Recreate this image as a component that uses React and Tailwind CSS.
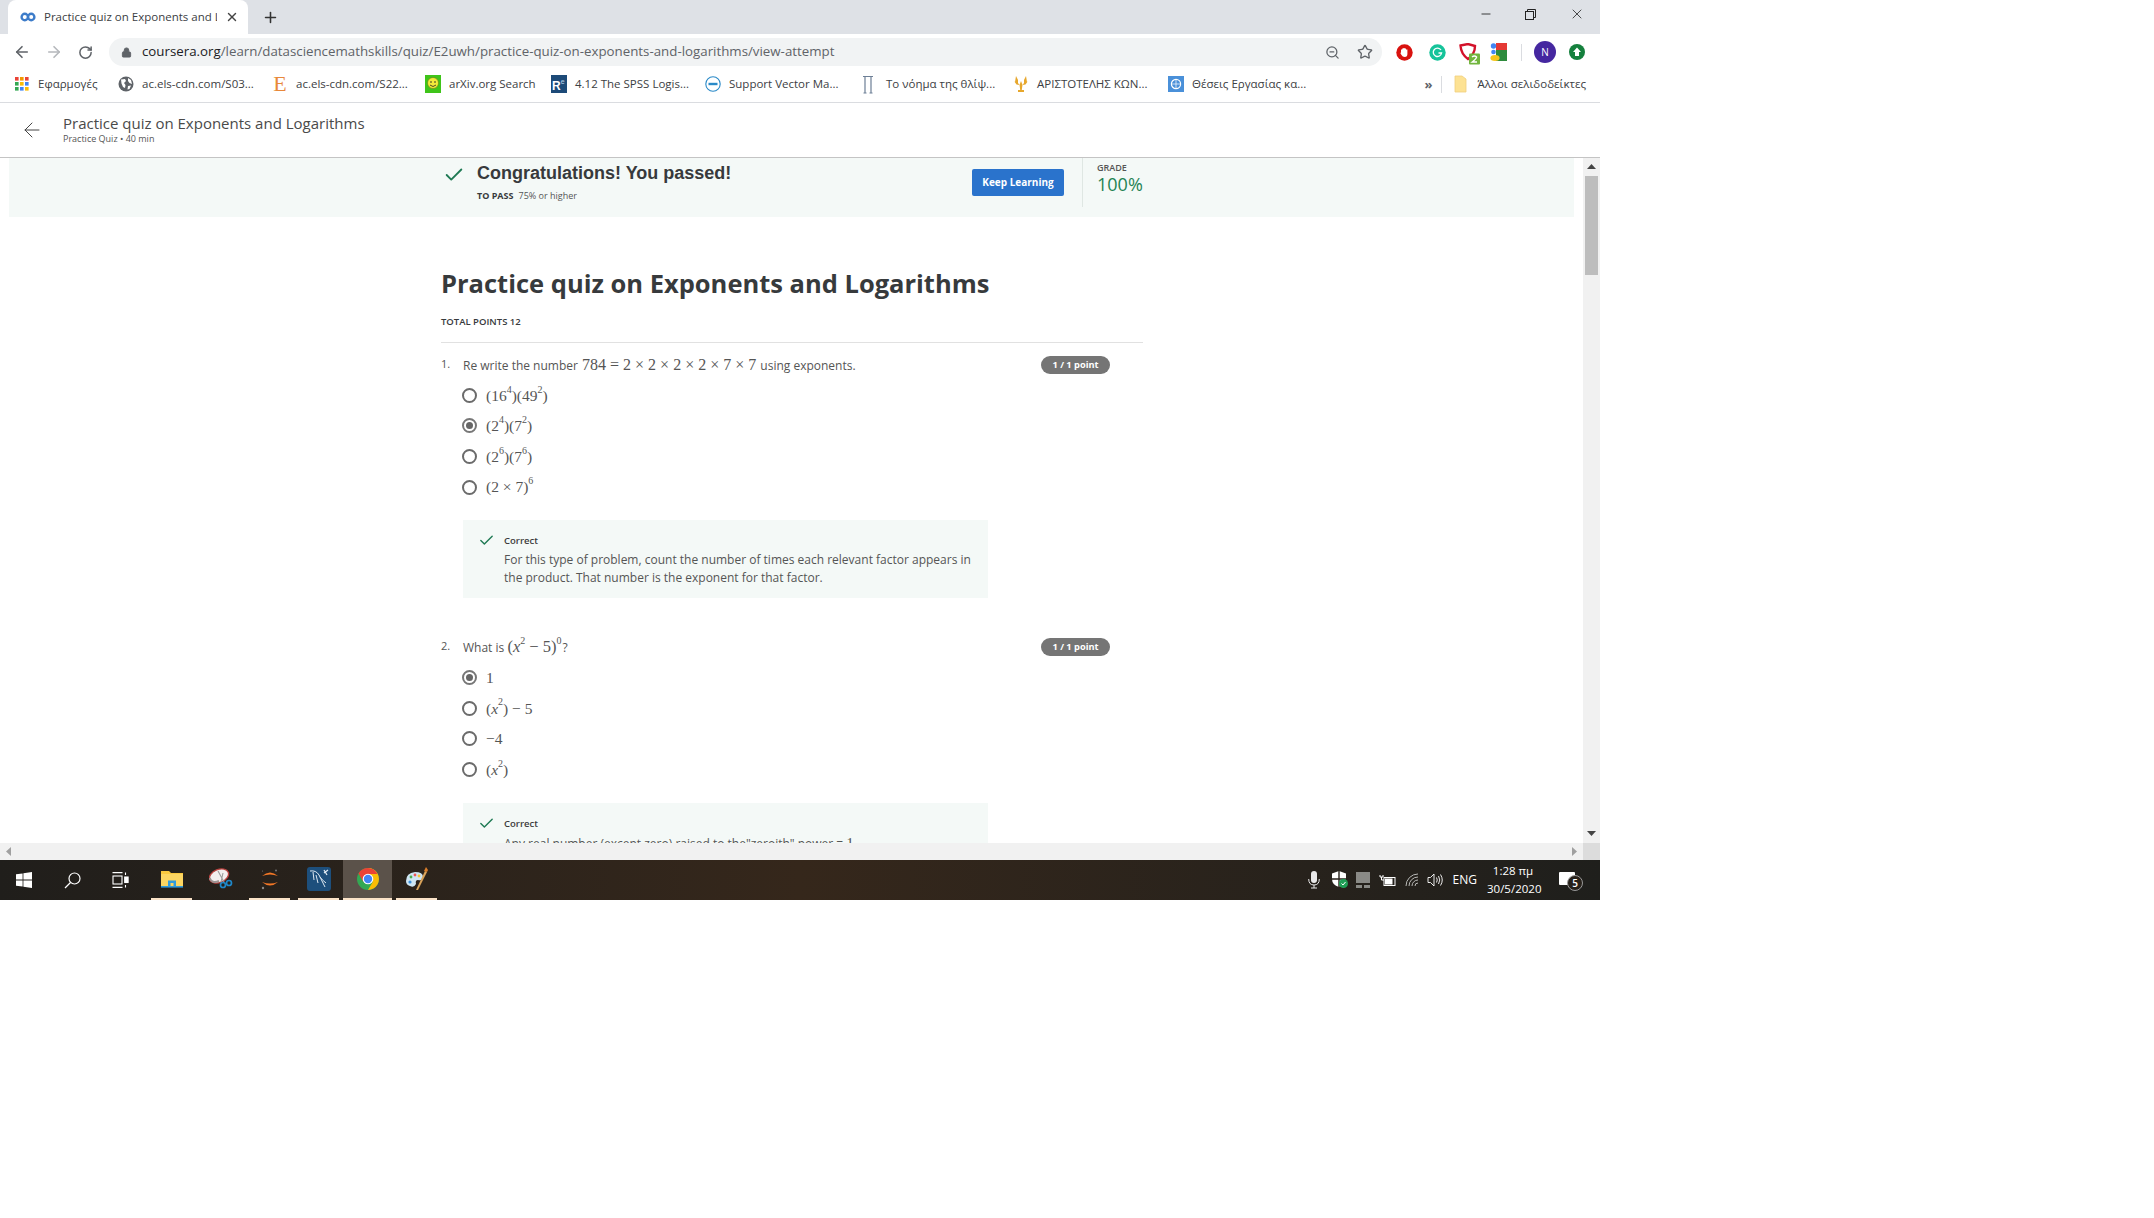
import React from "react";
import { ArrowLeft, ArrowRight, RotateCw, Lock, ZoomOut, Star, Plus, X, Minus, Check } from "lucide-react";

const ui = "font-['Open_Sans',sans-serif]";
const math = "font-['Liberation_Serif',serif]";

const Sup = ({ children }) => <sup className="text-[10px] leading-none relative -top-[2px] align-super">{children}</sup>;
const Var = ({ children }) => <i>{children}</i>;

const Favicon = () => (
  <svg width="16" height="16" viewBox="0 0 16 16" fill="none" stroke="#3d7cc9" strokeWidth="2.4">
    <circle cx="4.8" cy="8" r="3.2" />
    <circle cx="11.2" cy="8" r="3.2" />
  </svg>
);

const AppsIcon = () => {
  const colors = ["#ea4335", "#f29900", "#ea4335", "#34a853", "#fbbc05", "#4285f4", "#34a853", "#4285f4", "#fbbc05"];
  return (
    <svg width="14" height="14" viewBox="0 0 14 14">
      {colors.map((c, i) => (
        <rect key={i} x={(i % 3) * 5} y={Math.floor(i / 3) * 5} width="3.6" height="3.6" fill={c} />
      ))}
    </svg>
  );
};

const GlobeIcon = () => (
  <svg width="16" height="16" viewBox="0 0 16 16">
    <circle cx="8" cy="8" r="7.5" fill="#5f6368" />
    <path d="M3 3.5 L7 3 L8 5 L6 7 L7.5 9 L7 12 L5 11 L3.5 7.5 Z M10 2 L13 4 L14 8 L11.5 7 L10 5 Z M10 10 L13 9.5 L11.5 13 L9.5 13.5 Z" fill="#fff" />
  </svg>
);

const SerifE = () => <span className={`${math} text-[22px] leading-none text-[#e8883a]`}>E</span>;

const ArxivIcon = () => (
  <svg width="16" height="18" viewBox="0 0 16 18">
    <rect width="16" height="18" fill="#3fc41a" />
    <circle cx="8" cy="8" r="5.5" fill="#f2ea3a" stroke="#6a7a10" strokeWidth="0.6" />
    <circle cx="6" cy="7" r="0.8" fill="#222" />
    <circle cx="10" cy="7" r="0.8" fill="#222" />
    <path d="M5 10 Q8 13 11 10" stroke="#222" strokeWidth="0.8" fill="none" />
  </svg>
);

const RIcon = () => (
  <div className="w-[16px] h-[18px] bg-[#1d4a78] flex items-end pl-[1px] pb-[1px]">
    <span className="font-['Liberation_Sans',sans-serif] font-bold text-[12px] leading-none text-white">R</span>
    <span className="font-['Liberation_Sans',sans-serif] text-[7px] leading-none text-[#b9d3ea] mb-[7px]">e</span>
  </div>
);

const DellIcon = () => (
  <svg width="16" height="16" viewBox="0 0 16 16" fill="none">
    <circle cx="8" cy="8" r="7.2" stroke="#2a8ac8" strokeWidth="1.1" />
    <rect x="3.5" y="6.8" width="9" height="2.4" fill="#2a8ac8" />
  </svg>
);

const PiIcon = () => (
  <svg className="-ml-[4px]" width="12" height="19" viewBox="0 0 12 19" fill="none" stroke="#6d7f96" strokeWidth="1.2">
    <path d="M1 1.5 H11 M3 1.5 V18 M9 1.5 V18 M1.5 18 H4.5 M7.5 18 H10.5" />
  </svg>
);

const GoldIcon = () => (
  <svg width="16" height="18" viewBox="0 0 16 18" fill="#e7a72c">
    <path d="M8 6 L9.5 10 Q9 13 8.8 15 H11 V17 H5 V15 H7.2 Q7 13 6.5 10 Z" />
    <path d="M3 1 L5 5 L5 8 L6.5 10 L3.5 9.5 L1 6 L2 7 Z M13 1 L11 5 L11 8 L9.5 10 L12.5 9.5 L15 6 L14 7 Z" />
  </svg>
);

const UnIcon = () => (
  <svg width="16" height="16" viewBox="0 0 16 16">
    <rect width="16" height="16" fill="#4a90d9" />
    <circle cx="8" cy="8" r="4.6" fill="none" stroke="#fff" strokeWidth="1.2" />
    <path d="M8 3.5 V12.5 M3.5 8 H12.5" stroke="#fff" strokeWidth="0.7" />
  </svg>
);

const FolderBookmark = () => (
  <svg width="13" height="18" viewBox="0 0 13 18">
    <path d="M1 1 H8 L12 4 V17 H1 Z" fill="#fde293" stroke="#f0cf7d" strokeWidth="0.8" />
  </svg>
);

const bookmarks = [
  { label: "Εφαρμογές", icon: <AppsIcon />, width: "w-[104px]" },
  { label: "ac.els-cdn.com/S03...", icon: <GlobeIcon />, width: "w-[154px]" },
  { label: "ac.els-cdn.com/S22...", icon: <SerifE />, width: "w-[153px]" },
  { label: "arXiv.org Search", icon: <ArxivIcon />, width: "w-[126px]" },
  { label: "4.12 The SPSS Logis...", icon: <RIcon />, width: "w-[154px]" },
  { label: "Support Vector Ma...", icon: <DellIcon />, width: "w-[157px]" },
  { label: "Το νόημα της θλίψ...", icon: <PiIcon />, width: "w-[151px]" },
  { label: "ΑΡΙΣΤΟΤΕΛΗΣ ΚΩΝ...", icon: <GoldIcon />, width: "w-[155px]" },
  { label: "Θέσεις Εργασίας κα...", icon: <UnIcon />, width: "w-[150px]" },
];

const AdblockIcon = () => (
  <svg width="17" height="17" viewBox="0 0 17 17">
    <circle cx="8.5" cy="8.5" r="8.2" fill="#d9120f" />
    <path d="M5 9 V5.5 H6.2 V4.5 H7.4 V4 H8.6 V4.5 H10 V5.5 H11.4 V10 Q11.4 13 8.8 13 Q6.5 13 5.5 11 L4 8.5 Z" fill="#fff" />
  </svg>
);

const GrammarlyIcon = () => (
  <svg width="17" height="17" viewBox="0 0 17 17">
    <circle cx="8.5" cy="8.5" r="8.2" fill="#15c39a" />
    <path d="M12 6 A4.2 4.2 0 1 0 12.6 9 H9.5" fill="none" stroke="#fff" strokeWidth="1.3" />
  </svg>
);

const ShieldIcon = () => (
  <svg width="22" height="22" viewBox="0 0 22 22">
    <path d="M1.5 2.5 L9 1 L16 3 Q16 11 9 16 Q2 11 1.5 2.5 Z" fill="none" stroke="#d3122a" strokeWidth="2.4" />
    <rect x="10" y="10.5" width="11" height="11" rx="1" fill="#72b53e" />
    <path d="M13 14 Q15.5 12 17.6 14 Q17.6 15.5 13.2 19 H18" fill="none" stroke="#fff" strokeWidth="1.4" />
  </svg>
);

const GoogleExtIcon = () => (
  <svg width="17" height="18" viewBox="0 0 17 18">
    <rect x="6" y="0" width="11" height="9" fill="#e53935" />
    <rect x="6" y="7" width="11" height="11" fill="#2e8b3d" />
    <circle cx="3.5" cy="3" r="2.7" fill="#4285f4" />
    <circle cx="3.5" cy="9" r="2.3" fill="#4285f4" />
    <ellipse cx="5" cy="15" rx="4.6" ry="3" fill="#f8c51c" />
  </svg>
);

const UploadIcon = () => (
  <svg width="16" height="16" viewBox="0 0 16 16">
    <circle cx="8" cy="8" r="8" fill="#15803d" />
    <path d="M8 3.5 L12 8 H10 V12 H6 V8 H4 Z" fill="#fff" />
  </svg>
);

const WinLogo = () => (
  <svg width="16" height="16" viewBox="0 0 16 16" fill="#fff">
    <path d="M0 2.3 L6.6 1.4 V7.6 H0 Z M7.4 1.3 L16 0 V7.6 H7.4 Z M0 8.4 H6.6 V14.6 L0 13.7 Z M7.4 8.4 H16 V16 L7.4 14.7 Z" />
  </svg>
);

const SearchTask = () => (
  <svg width="17" height="17" viewBox="0 0 17 17" fill="none" stroke="#fff" strokeWidth="1.2">
    <circle cx="10.5" cy="6.5" r="5.5" />
    <path d="M6.5 10.5 L1 16" />
  </svg>
);

const TaskView = () => (
  <svg width="17" height="16" viewBox="0 0 17 16" fill="none" stroke="#fff" strokeWidth="1.1">
    <path d="M0.5 0.6 H10.5 M0.5 15.4 H10.5" />
    <rect x="1" y="4" width="9" height="8" />
    <path d="M13.5 0.5 V3 M13.5 13 V15.5" />
    <rect x="12.7" y="5" width="3.4" height="5.5" fill="#fff" />
  </svg>
);

const ExplorerIcon = () => (
  <svg width="22" height="18" viewBox="0 0 22 18">
    <path d="M0 1 H8 L10 3 H22 V17 H0 Z" fill="#f9c83f" />
    <rect x="0" y="4" width="22" height="13" fill="#fbd562" />
    <path d="M7 16.5 V10.5 H15 V16.5 H12.5 V13 H9.5 V16.5 Z" fill="#2f9bdc" />
    <rect x="0" y="16" width="22" height="1.6" fill="#2f9bdc" />
  </svg>
);

const SnipIcon = () => (
  <svg width="24" height="22" viewBox="0 0 24 22">
    <ellipse cx="10" cy="8" rx="10" ry="6.5" transform="rotate(-22 10 8)" fill="#f3eeee" stroke="#b9423f" strokeWidth="1.4" />
    <path d="M0.5 10 Q3 16 10 13" fill="none" stroke="#9c9292" strokeWidth="2" />
    <path d="M9 3 L15 14 M14 5 L12 14" stroke="#9a9a9a" strokeWidth="1.1" />
    <circle cx="14" cy="17" r="2.5" fill="none" stroke="#1f88c9" strokeWidth="1.7" />
    <circle cx="20" cy="15" r="2.5" fill="none" stroke="#1f88c9" strokeWidth="1.7" />
  </svg>
);

const JupyterIcon = () => (
  <svg width="20" height="22" viewBox="0 0 20 22">
    <path d="M2 8 Q10 1 18 8 Q10 5 2 8 Z M2 14 Q10 21 18 14 Q10 17 2 14 Z" fill="#f37726" />
    <circle cx="16" cy="2.5" r="1" fill="#777" />
    <circle cx="3" cy="20" r="1.2" fill="#888" />
    <circle cx="2.5" cy="3" r="0.6" fill="#777" />
  </svg>
);

const MysqlIcon = () => (
  <svg width="24" height="24" viewBox="0 0 24 24">
    <rect width="24" height="24" rx="3" fill="#1d4f7c" />
    <path d="M3 4 Q9 3 12 8 Q14 12 15 14 L18 20 M6 5 L7 13 M9 8 L11 16 M13 10 Q15 13 19 16" fill="none" stroke="#dfe9f2" strokeWidth="1" />
    <path d="M17 3 L20 8 M21 3 L17 6" stroke="#dfe9f2" strokeWidth="1.3" />
  </svg>
);

const ChromeIcon = () => (
  <svg width="22" height="22" viewBox="0 0 22 22">
    <circle cx="11" cy="11" r="11" fill="#34a853" />
    <path d="M11 0 A11 11 0 0 1 20.5 5.5 L11 5.5 Z M11 5.5 H20.5 A11 11 0 0 1 11 22 L15.8 13.8 Z" fill="#fbbc05" />
    <path d="M11 0 A11 11 0 0 0 1.5 5.5 L6.2 13.8 L11 6 H20.5 A11 11 0 0 0 11 0 Z" fill="#ea4335" />
    <circle cx="11" cy="11" r="5.3" fill="#fff" />
    <circle cx="11" cy="11" r="4.2" fill="#4285f4" />
  </svg>
);

const PaintIcon = () => (
  <svg width="24" height="24" viewBox="0 0 24 24">
    <path d="M1 14 Q1 6 10 5 Q18 5 18 10 Q18 14 13 13 Q10 13 11 17 Q9 21 5 19 Q1 18 1 14 Z" fill="#cfe6f4" />
    <circle cx="6" cy="10" r="1.4" fill="#4caf50" />
    <circle cx="10" cy="8" r="1.4" fill="#e55" />
    <circle cx="14" cy="9" r="1.4" fill="#f5c53a" />
    <circle cx="5" cy="15" r="1.6" fill="#3a8fdc" />
    <path d="M11 23 L20 4 L22 5 L13 23 Z" fill="#d9a35a" />
    <path d="M19 4 L21 0 L23 3 L22 5 Z" fill="#d87d2b" />
  </svg>
);

const taskApps = [
  { key: "explorer", icon: <ExplorerIcon />, bar: true },
  { key: "snip", icon: <SnipIcon />, bar: false },
  { key: "jupyter", icon: <JupyterIcon />, bar: true },
  { key: "mysql", icon: <MysqlIcon />, bar: true },
  { key: "chrome", icon: <ChromeIcon />, bar: true, active: true },
  { key: "paint", icon: <PaintIcon />, bar: true },
];

const TrayIcons = () => (
  <div className="flex items-center">
    <svg className="ml-[8px]" width="12" height="18" viewBox="0 0 12 18" fill="#e9e9e9">
      <rect x="3" y="0" width="6" height="12" rx="3" />
      <path d="M0.7 8 Q0.7 14 6 14 Q11.3 14 11.3 8 M6 14 V17 M3 17 H9" fill="none" stroke="#e9e9e9" />
    </svg>
    <svg className="ml-[12px]" width="16" height="18" viewBox="0 0 16 18">
      <path d="M7 0 L14 2.5 V8 Q14 14 7 16 Q0 14 0 8 V2.5 Z" fill="#fff" />
      <path d="M7 0 V16 M0 8 H14" stroke="#27211a" strokeWidth="1.4" />
      <circle cx="11.5" cy="12.5" r="4.5" fill="#1f9d55" />
      <path d="M9.5 12.5 L11 14 L13.5 11" stroke="#fff" fill="none" />
    </svg>
    <svg className="ml-[8px]" width="14" height="16" viewBox="0 0 14 16" fill="#8a8a86">
      <rect x="0" y="0" width="14" height="11" />
      <rect x="0" y="13" width="6" height="3" />
      <rect x="8" y="13" width="6" height="3" />
    </svg>
    <svg className="ml-[9px]" width="17" height="13" viewBox="0 0 17 13" fill="none" stroke="#fff">
      <rect x="5" y="3.5" width="11" height="8" />
      <rect x="6.5" y="5" width="6.5" height="5" fill="#fff" />
      <path d="M1 1 V3 H4 V1 M2.5 3 V6 H5" />
    </svg>
    <svg className="ml-[9px]" width="14" height="14" viewBox="0 0 14 14" fill="none" stroke="#b9b9b6">
      <path d="M1 13 A12 12 0 0 1 13 1 M4 13 A9 9 0 0 1 13 4 M7 13 A6 6 0 0 1 13 7 M10 13 A3 3 0 0 1 13 10" />
    </svg>
    <svg className="ml-[8px]" width="17" height="14" viewBox="0 0 17 14" fill="none" stroke="#fff" strokeWidth="0.9">
      <path d="M1 4.5 H3.5 L7 1 V13 L3.5 9.5 H1 Z M9.5 4.5 Q11 7 9.5 9.5 M11.5 3 Q14 7 11.5 11 M13.5 1.5 Q17 7 13.5 12.5" />
    </svg>
  </div>
);

const Radio = ({ checked }) => (
  <span className={`w-[15px] h-[15px] rounded-full border-2 flex items-center justify-center shrink-0 ${checked ? "border-[#777]" : "border-[#6b6b6b]"}`}>
    {checked && <span className="w-[7px] h-[7px] rounded-full bg-[#666]" />}
  </span>
);

const Question = ({ number, text, options, selected, feedback }) => (
  <div>
    <div className="flex h-[18px] items-center w-[669px]">
      <span className="w-[22px] text-[11px] text-[#555] -mt-[2px]">{number}.</span>
      <div className="flex-1 text-[12px] text-[#555] whitespace-nowrap">{text}</div>
      <span className="w-[69px] h-[18px] rounded-full bg-[#757575] text-white text-[9.25px] font-bold flex items-center justify-center">1 / 1 point</span>
    </div>
    <div className="mt-[6px] ml-[21px]">
      {options.map((opt, i) => (
        <div key={i} className="flex items-center h-[30.6px] gap-[9px]">
          <Radio checked={i === selected} />
          <span className={`${math} text-[15.5px] text-[#555]`}>{opt}</span>
        </div>
      ))}
    </div>
    <div className="mt-[18px] ml-[22px] w-[525px] bg-[#f4f9f7] pt-[12px] pb-[11px] pl-[15px] flex gap-[9px]">
      <Check className="w-[17px] h-[17px] text-[#1f7a54] shrink-0" strokeWidth={2} />
      <div className="w-[480px]">
        <div className="text-[9.5px] font-semibold text-[#3c3c3c] h-[19px] leading-[17px]">Correct</div>
        <div className="text-[12px] leading-[18px] text-[#555]">{feedback}</div>
      </div>
    </div>
  </div>
);

const q1 = {
  number: 1,
  text: (
    <>
      Re write the number <span className={`${math} text-[16px] mx-[1px]`}>784 = 2 × 2 × 2 × 2 × 7 × 7</span> using exponents.
    </>
  ),
  options: [
    <>(16<Sup>4</Sup>)(49<Sup>2</Sup>)</>,
    <>(2<Sup>4</Sup>)(7<Sup>2</Sup>)</>,
    <>(2<Sup>6</Sup>)(7<Sup>6</Sup>)</>,
    <>(2 × 7)<Sup>6</Sup></>,
  ],
  selected: 1,
  feedback: "For this type of problem, count the number of times each relevant factor appears in the product. That number is the exponent for that factor.",
};

const q2 = {
  number: 2,
  text: (
    <>
      What is <span className={`${math} text-[16.5px] mr-[1px]`}>(<Var>x</Var><Sup>2</Sup> − 5)<Sup>0</Sup></span>?
    </>
  ),
  options: [
    <>1</>,
    <>(<Var>x</Var><Sup>2</Sup>) − 5</>,
    <>−4</>,
    <>(<Var>x</Var><Sup>2</Sup>)</>,
  ],
  selected: 0,
  feedback: (
    <>
      Any real number (except zero) raised to the"zeroith" power = <span className={`${math} text-[15px]`}>1</span>
    </>
  ),
};

export default function App() {
  return (
    <div className={`w-[1600px] h-[900px] flex flex-col overflow-hidden bg-white ${ui}`}>
      {/* tab strip */}
      <div className="h-[34px] bg-[#dee1e6] flex items-end pl-[8px] shrink-0">
        <div className="w-[240px] h-[34px] bg-white rounded-t-[8px] flex items-center pl-[12px] pr-[9px] gap-[8px]">
          <Favicon />
          <span className="flex-1 text-[11.5px] text-[#3c4043] whitespace-nowrap overflow-hidden">Practice quiz on Exponents and Logarithms</span>
          <X className="w-[14px] h-[14px] text-[#444]" strokeWidth={2.4} />
        </div>
        <Plus className="w-[17px] h-[17px] ml-[14px] mb-[8px] text-[#333]" strokeWidth={2.2} />
        <div className="flex-1" />
        <div className="flex items-center h-[28px] self-start pr-[15px]">
          <Minus className="w-[14px] h-[14px] text-[#222]" strokeWidth={1.5} />
          <svg className="ml-[32px]" width="11" height="11" viewBox="0 0 11 11" fill="none" stroke="#222">
            <rect x="0.5" y="2.5" width="8" height="8" />
            <path d="M2.5 2.5 V0.5 H10.5 V8.5 H8.5" />
          </svg>
          <X className="ml-[33px] w-[16px] h-[16px] text-[#222]" strokeWidth={1.2} />
        </div>
      </div>

      {/* toolbar */}
      <div className="h-[34px] bg-white flex items-center shrink-0 pl-[13px] pt-[2px]">
        <ArrowLeft className="w-[18px] h-[18px] text-[#5f6368]" strokeWidth={2.2} />
        <ArrowRight className="ml-[14px] w-[18px] h-[18px] text-[#b5b8bc]" strokeWidth={2.2} />
        <RotateCw className="ml-[15px] w-[15px] h-[15px] text-[#5f6368]" strokeWidth={2.4} />
        <div className="ml-[16px] w-[1273px] h-[28px] rounded-full bg-[#f1f3f4] flex items-center pl-[12px] pr-[9px]">
          <Lock className="w-[11px] h-[11px] text-[#5f6368]" fill="#5f6368" strokeWidth={2} />
          <span className="ml-[10px] text-[13.3px] text-[#202124]">
            coursera.org<span className="text-[#5f6368]">/learn/datasciencemathskills/quiz/E2uwh/practice-quiz-on-exponents-and-logarithms/view-attempt</span>
          </span>
          <div className="flex-1" />
          <ZoomOut className="w-[15px] h-[15px] text-[#5f6368]" strokeWidth={2} />
          <Star className="ml-[17px] w-[16px] h-[16px] text-[#5f6368]" strokeWidth={2} />
        </div>
        <div className="ml-[14px]"><AdblockIcon /></div>
        <div className="ml-[16px]"><GrammarlyIcon /></div>
        <div className="ml-[13px] mt-[4px]"><ShieldIcon /></div>
        <div className="ml-[9px]"><GoogleExtIcon /></div>
        <div className="ml-[14px] w-px h-[17px] bg-[#dadce0]" />
        <div className="ml-[12px] w-[22px] h-[22px] rounded-full bg-[#4527a0] text-white text-[10px] flex items-center justify-center">N</div>
        <div className="ml-[13px]"><UploadIcon /></div>
      </div>

      {/* bookmarks */}
      <div className="h-[35px] bg-white border-b border-[#dadce0] flex items-center pl-[14px] pb-[2px] shrink-0 text-[11.5px] text-[#3c4043]">
        {bookmarks.map((b) => (
          <div key={b.label} className={`flex items-center gap-[8px] whitespace-nowrap ${b.width}`}>
            <span className="w-[16px] flex justify-center">{b.icon}</span>
            <span>{b.label}</span>
          </div>
        ))}
        <div className="flex-1" />
        <span className="text-[13px] font-bold text-[#5f6368] leading-none">»</span>
        <div className="ml-[9px] w-px h-[17px] bg-[#dadce0]" />
        <div className="ml-[12px]"><FolderBookmark /></div>
        <span className="ml-[10px] mr-[14px] whitespace-nowrap">Άλλοι σελιδοδείκτες</span>
      </div>

      {/* course header */}
      <div className="h-[55px] border-b border-[#c4c4c4] flex items-center pl-[20px] shrink-0">
        <ArrowLeft className="w-[24px] h-[24px] text-[#444]" strokeWidth={1} />
        <div className="ml-[19px] -mt-[1px]">
          <div className="text-[15px] leading-[17px] text-[#4a4a4a]">Practice quiz on Exponents and Logarithms</div>
          <div className="text-[9px] leading-[13px] text-[#555]">Practice Quiz • 40 min</div>
        </div>
      </div>

      {/* page + scrollbar */}
      <div className="h-[685px] flex shrink-0">
        <div className="w-[1583px] overflow-hidden">
          <div className="ml-[9px] w-[1565px] h-[59px] bg-[#f4f9f7] flex pl-[434px]">
            <Check className="w-[22px] h-[22px] text-[#1f7a54] mt-[6px]" strokeWidth={2} />
            <div className="ml-[12px] w-[495px] pt-[4px]">
              <div className="font-['Liberation_Sans',sans-serif] font-bold text-[18px] leading-[22px] text-[#373a3c]">Congratulations! You passed!</div>
              <div className="mt-[6px] text-[9px] leading-[12px] text-[#555]">
                <span className="font-bold text-[#373a3c] mr-[5px]">TO PASS</span>75% or higher
              </div>
            </div>
            <div className="w-[92px] h-[27px] mt-[11px] rounded-[2px] bg-[#2a73cc] text-white text-[10px] font-bold flex items-center justify-center">Keep Learning</div>
            <div className="ml-[18px] w-px h-[49px] bg-[#dfe7e3]" />
            <div className="ml-[14px] pt-[4px]">
              <div className="text-[9px] leading-[12px] font-semibold text-[#555]">GRADE</div>
              <div className="-mt-[1px] text-[18px] leading-[22px] text-[#1f8354]">100%</div>
            </div>
          </div>

          <div className="ml-[441px] w-[702px]">
            <h1 className="mt-[48px] text-[25.5px] leading-[36px] font-bold text-[#373a3c] whitespace-nowrap">Practice quiz on Exponents and Logarithms</h1>
            <div className="mt-[14px] text-[9.5px] leading-[14px] font-semibold text-[#373a3c]">TOTAL POINTS 12</div>
            <div className="mt-[13px] h-px bg-[#e1e1e1]" />
            <div className="mt-[13px]">
              <Question {...q1} />
            </div>
            <div className="mt-[40px]">
              <Question {...q2} />
            </div>
          </div>
        </div>
        <div className="w-[17px] bg-[#f1f1f1] flex flex-col items-center">
          <svg className="mt-[6px]" width="9" height="5" viewBox="0 0 9 5" fill="#444"><path d="M4.5 0 L9 5 H0 Z" /></svg>
          <div className="mt-[7px] w-[13px] h-[99px] bg-[#bdbdbd]" />
          <div className="flex-1" />
          <svg className="mb-[7px]" width="9" height="5" viewBox="0 0 9 5" fill="#444"><path d="M4.5 5 L9 0 H0 Z" /></svg>
        </div>
      </div>

      {/* horizontal scrollbar */}
      <div className="h-[17px] flex shrink-0">
        <div className="w-[1583px] bg-[#f1f1f1] flex items-center justify-between px-[6px]">
          <svg width="5" height="9" viewBox="0 0 5 9" fill="#a0a0a0"><path d="M0 4.5 L5 0 V9 Z" /></svg>
          <svg width="5" height="9" viewBox="0 0 5 9" fill="#a0a0a0"><path d="M5 4.5 L0 0 V9 Z" /></svg>
        </div>
        <div className="w-[17px] bg-[#dcdcdc]" />
      </div>

      {/* taskbar */}
      <div className="h-[40px] flex items-stretch shrink-0 bg-linear-to-r from-[#201e1b] via-[#35271b] to-[#1f1f1c] text-white">
        <div className="w-[48px] flex items-center justify-center"><WinLogo /></div>
        <div className="w-[48px] flex items-center justify-center"><SearchTask /></div>
        <div className="w-[48px] flex items-center justify-center"><TaskView /></div>
        <div className="ml-[3px] flex">
          {taskApps.map((app) => (
            <div key={app.key} className={`w-[49px] flex flex-col ${app.active ? "bg-[#5b524a]" : ""}`}>
              <div className="flex-1 flex items-center justify-center">{app.icon}</div>
              <div className={`h-[2px] ${app.active ? "" : "mx-[4px]"} ${app.bar ? "bg-[#fbe3c8]" : ""}`} />
            </div>
          ))}
        </div>
        <div className="flex-1 flex items-center justify-end">
          <TrayIcons />
          <span className="ml-[9px] text-[12px]">ENG</span>
          <div className="ml-[10px] w-[52px] text-center text-[11.5px] leading-[18px] whitespace-nowrap">
            <div>1:28 πμ</div>
            <div>30/5/2020</div>
          </div>
          <div className="ml-[20px] mr-[17px] w-[24px] h-[28px] flex items-center">
            <div className="w-[16px] h-[13px] bg-white rounded-[1px] -mt-[4px]" />
            <div className="-ml-[8px] mt-[5px] w-[16px] h-[16px] rounded-full border border-[#999] bg-[#27211a] text-[10px] font-semibold leading-none flex items-center justify-center">5</div>
          </div>
        </div>
      </div>
    </div>
  );
}
